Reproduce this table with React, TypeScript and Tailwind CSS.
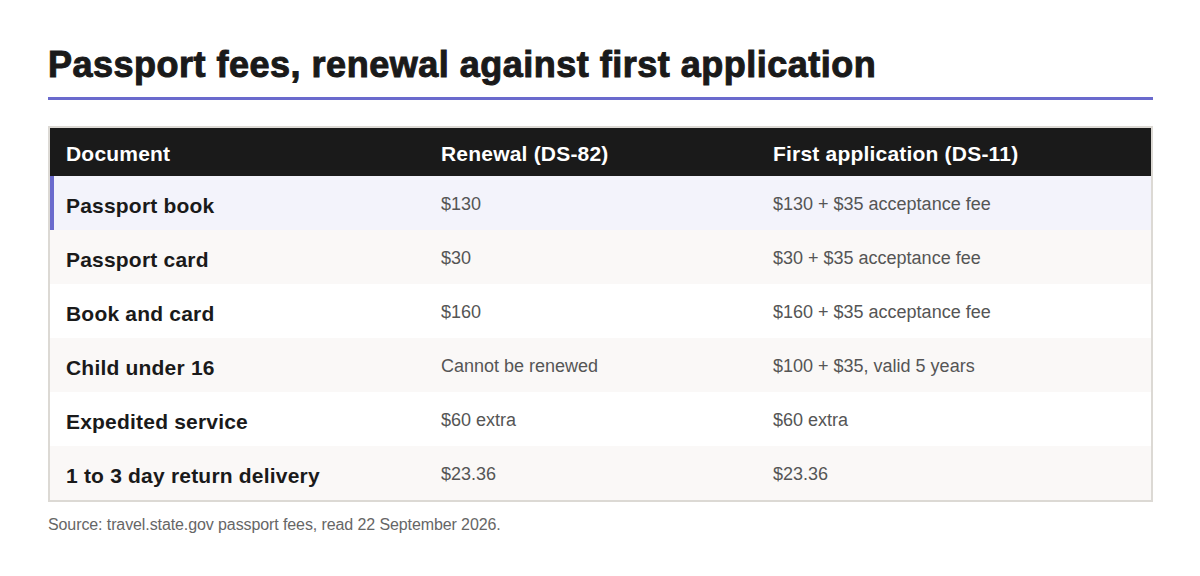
import React from "react";

const rows = [
  ["Passport book", "$130", "$130 + $35 acceptance fee"],
  ["Passport card", "$30", "$30 + $35 acceptance fee"],
  ["Book and card", "$160", "$160 + $35 acceptance fee"],
  ["Child under 16", "Cannot be renewed", "$100 + $35, valid 5 years"],
  ["Expedited service", "$60 extra", "$60 extra"],
  ["1 to 3 day return delivery", "$23.36", "$23.36"],
];

export default function App() {
  return (
    <div className="w-[1200px] h-[576px] bg-white px-[48px] pt-[44px] font-['Liberation_Sans',Arial,sans-serif]">
      <h1 className="text-[36px] leading-[42px] font-black text-[#1a1a1a] tracking-[0.5px] [-webkit-text-stroke:1px_#1a1a1a]">
        Passport fees, renewal against first application
      </h1>
      <div className="mt-[11px] h-[3px] w-[1105px] bg-[#6a6acd]" />
      <div className="mt-[26px] w-[1105px] border-2 border-[#dcd9d4]">
        <div className="flex h-[48px] items-center bg-[#1a1a1a] text-[21px] tracking-[0.2px] font-bold text-white pt-[3px]">
          <div className="w-[375px] pl-[16px]">Document</div>
          <div className="w-[332px] pl-[16px]">Renewal (DS-82)</div>
          <div className="flex-1 pl-[16px]">First application (DS-11)</div>
        </div>
        {rows.map((r, i) => (
          <div
            key={i}
            className={
              "flex h-[54px] items-center " +
              (i === 0
                ? "bg-[#f3f3fb] border-l-4 border-[#6a6acd]"
                : i % 2 === 1
                ? "bg-[#faf8f7]"
                : "bg-white")
            }
          >
            <div
              className={
                "text-[21px] tracking-[0.2px] font-bold text-[#1a1a1a] pt-[5px] " +
                (i === 0 ? "w-[371px] pl-[12px]" : "w-[375px] pl-[16px]")
              }
            >
              {r[0]}
            </div>
            <div className="w-[332px] pl-[16px] text-[18px] text-[#555555] pt-[3px]">{r[1]}</div>
            <div className="flex-1 pl-[16px] text-[18px] text-[#555555] pt-[3px]">{r[2]}</div>
          </div>
        ))}
      </div>
      <p className="mt-[11px] text-[16px] tracking-[-0.1px] text-[#666666]">
        Source: travel.state.gov passport fees, read 22 September 2026.
      </p>
    </div>
  );
}
